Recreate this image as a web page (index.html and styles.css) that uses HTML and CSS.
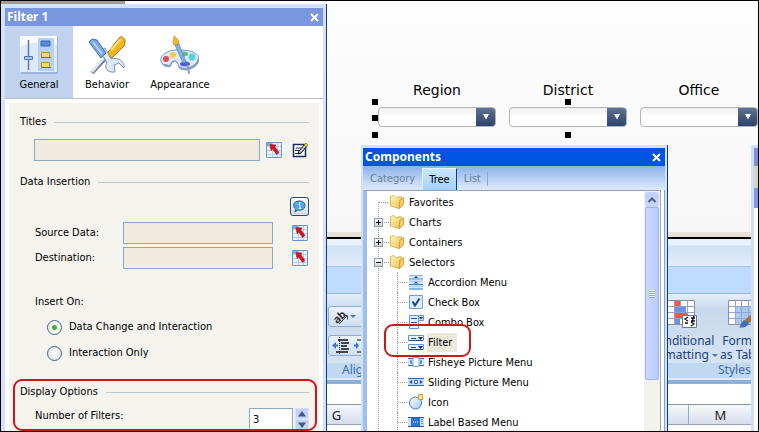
FILE: index.html
```html
<!DOCTYPE html>
<html lang="en">
<head>
<meta charset="utf-8">
<title>Filter properties</title>
<link rel="stylesheet" href="styles.css">
</head>
<body>
<svg class="defs" aria-hidden="true">
  <defs>
    <linearGradient id="gold" x1="0" y1="0" x2="1" y2="1"><stop offset="0" stop-color="#fff6b8"/><stop offset="1" stop-color="#e9c050"/></linearGradient>
    <linearGradient id="ice" x1="0" y1="0" x2="1" y2="1"><stop offset="0" stop-color="#ffffff"/><stop offset="1" stop-color="#a4c8f0"/></linearGradient>
    <symbol id="folder" viewBox="0 0 16 16">
      <path d="M1.500 2.500 5 1.500 7 3.500 12 2.500 13 4 13 12 10 14.500 1.500 12Z" fill="url(#gold)" stroke="#d2aa48" stroke-width=".8"/>
      <path d="M10 14.500 11 6 14.800 3.500 14.500 11Z" fill="#f3cf66" stroke="#b98a2c" stroke-width=".7"/>
    </symbol>
    <symbol id="cellpick" viewBox="0 0 18 18">
      <path d="M0 0h18v18H0z" fill="#fff"/>
      <path d="M1.500 1.500h15v15h-15z" fill="#eef6ff" stroke="#5f95cf"/>
      <path d="M2 2h5v3H2z" fill="#7fb0ee"/>
      <path d="M2 5.500h14M2 9.500h14M2 13.500h14M7.500 2v14M12.500 2v14" stroke="#b3d0f0"/>
      <path d="M5 3.500 11 4 9.800 5.800 14 11.500 11.500 13.500 7.800 8 6 9.500Z" fill="#dd1018" stroke="#a80c14" stroke-width=".6"/>
    </symbol>
  </defs>
</svg>
<main class="desktop">
  <section class="canvas">
    <div class="filters">
      <label class="filter"><span>Region</span><span class="combo"><select></select><svg viewBox="0 0 8 6"><path d="M1 0h6L4 5.500z"/></svg></span></label>
      <label class="filter"><span>District</span><span class="combo"><select></select><svg viewBox="0 0 8 6"><path d="M1 0h6L4 5.500z"/></svg></span></label>
      <label class="filter"><span>Office</span><span class="combo"><select></select><svg viewBox="0 0 8 6"><path d="M1 0h6L4 5.500z"/></svg></span></label>
      <i class="handle left top"></i><i class="handle left middle"></i><i class="handle left bottom"></i>
      <i class="handle center top"></i><i class="handle center bottom"></i>
    </div>
  </section>

  <section class="sheet">
    <div class="sheet-title"></div>
    <div class="sheet-tabs"></div>
    <div class="ribbon">
      <div class="group align">
        <div class="group-body">
          <button class="tool" aria-label="Orientation"><svg viewBox="0 0 32 20">
            <text x="4" y="15" transform="rotate(-42 9 11)" font-size="11" font-weight="bold" fill="#333">ab</text>
            <path d="M10 17 18 9M14.500 8.500h4v4" fill="none" stroke="#444"/><path d="M21 8h6l-3 3z" fill="#4a78b5"/></svg></button>
          <button class="tool" aria-label="Indent"><svg viewBox="0 0 32 20">
            <path d="M9 4h10M12 7h8M12 10h6M12 13h8M7 16h12" stroke="#111" stroke-width="1.500"/><path d="M10.500 1v18" stroke="#111" stroke-dasharray="1 1"/><path d="M3 9.500 7 6v2.500h2v2H7V13z" fill="#3a78cc"/>
            <path d="M30 9.500 27 6v2.500h-2v2h2V13z" fill="#3a78cc"/><path d="M28 4h4M28 16h4" stroke="#111"/></svg></button>
        </div>
        <div class="group-name">Alignment</div>
      </div>
      <div class="group styles">
        <div class="group-body">
          <button class="big"><svg viewBox="0 0 30 30">
            <path d="M.5 1.500h27v24H.500z" fill="#fff" stroke="#8590a8"/>
            <path d="M8 2h6v6H8z" fill="#ee5a48"/><path d="M8 8h11v6H8z" fill="#6a92e8"/><path d="M8 14h12v6H8z" fill="#ee5a48"/><path d="M8 20h5v5H8z" fill="#6a92e8"/>
            <path d="M1 7.500h26M1 13.500h26M1 19.500h26M7.500 2v24M13.500 2v5M20.500 2v24" stroke="#98a2b8" fill="none"/>
            <path d="M15.500 16.500h14v12h-14z" fill="#fff" stroke="#6a7890"/>
            <path d="m21 18-3 2 3 2M18 24h3M24 19h4M24 22h4M27 17l-2 6M24 23l3 2-3 2" fill="none" stroke="#111" stroke-width="1.300"/>
            </svg><span>Conditional<br>Formatting <i class="caret"></i></span></button>
          <button class="big"><svg viewBox="0 0 30 30">
            <path d="M.5 1.500h27v24H.500z" fill="#fff" stroke="#8590a8"/><path d="M8 8h19v17H8z" fill="#a9c8f5"/>
            <path d="M1 7.500h26M1 13.500h26M1 19.500h26M7.500 2v24M13.500 2v24M20.500 2v24" stroke="#8fa5cc" fill="none"/>
            <path d="M11 28c2-1 2-6 6-7l4 3c-2 5-7 5-10 4z" fill="#3c6fc0"/><path d="M17 21 28 11v7l-7 6z" fill="#a8722c"/>
            </svg><span>Format<br>as Table</span></button>
        </div>
        <div class="group-name">Styles</div>
      </div>
    </div>
    <div class="formula"></div>
    <div class="columns"><span>G</span><span></span><span></span><span></span><span></span><span></span><span>M</span><span></span></div>
    <div class="cells"></div>
  </section>

  <section class="window docked" aria-label="Panel">
    <header class="titlebar"></header>
    <div class="docked-strip"></div>
    <div class="docked-body"></div>
  </section>

  <section class="window components">
    <header class="titlebar"><h2>Components</h2><button class="close" aria-label="Close"><svg viewBox="0 0 9 9"><path d="m1 1 7 7M8 1 1 8"/></svg></button></header>
    <nav class="tabs"><button>Category</button><button class="on">Tree</button><button>List</button></nav>
    <div class="tree-pane">
      <ul class="tree">
        <li class="first"><svg class="ic"><use href="#folder"/></svg><span>Favorites</span></li>
        <li class="node"><button aria-label="Expand"><svg viewBox="0 0 9 9"><path d="M2 4.500h5M4.500 2v5"/></svg></button><svg class="ic"><use href="#folder"/></svg><span>Charts</span></li>
        <li class="node"><button aria-label="Expand"><svg viewBox="0 0 9 9"><path d="M2 4.500h5M4.500 2v5"/></svg></button><svg class="ic"><use href="#folder"/></svg><span>Containers</span></li>
        <li class="node"><button aria-label="Collapse"><svg viewBox="0 0 9 9"><path d="M2 4.500h5"/></svg></button><svg class="ic"><use href="#folder"/></svg><span>Selectors</span></li>
        <li class="leaf"><svg class="ic" viewBox="0 0 16 16"><path d="M1 1.500h14v3H1zM1 7h14v3H1zM1 12h14v3.500H1z" fill="#d3e8ff"/><path d="M1 5h14M1 10.500h14M1 15h14" stroke="#3a7fd0"/><path d="M1 1.500h14M1 7h14M1 12h14" stroke="#8dbcf0"/><path d="M6 4h4L8 2zM6 9.500h4L8 7.500z" fill="#123a7a"/></svg><span>Accordion Menu</span></li>
        <li class="leaf"><svg class="ic" viewBox="0 0 16 16"><path d="M1.500 1.500h13v13h-13z" fill="#dcedff" stroke="#6fa3de"/><path d="m4.500 7.500 2.500 4 4.500-7" fill="none" stroke="#17438c" stroke-width="2"/></svg><span>Check Box</span></li>
        <li class="leaf"><svg class="ic" viewBox="0 0 16 16"><path d="M1.500 1.500h9v13h-9z" fill="#e4f1ff" stroke="#5b97dc"/><path d="M10.500 1.500h5v5h-5z" fill="#d3e8ff" stroke="#5b97dc"/><path d="M3 4.500h6M3 8.500h6M3 11.500h6" stroke="#1d4d96"/><path d="M11 3h4l-2 2.500z" fill="#102f66"/></svg><span>Combo Box</span></li>
        <li class="leaf picked"><svg class="ic" viewBox="0 0 16 16"><path d="M.5 1.500h15v5H.500zM.500 10.500h15v5H.500z" fill="#e4f1ff" stroke="#5b97dc"/><path d="M3 4.500h5M3 13.500h5M1 6.500h14M1 15.500h14" stroke="#1d4d96"/><path d="M10 3h5l-2.500 3zM10 12h5l-2.500 3z" fill="#102f66"/></svg><span>Filter</span></li>
        <li class="leaf"><svg class="ic" viewBox="0 0 16 16"><path d="M0 5h16v6.500H0z" fill="#d3e8ff"/><path d="M0 4.500h16M0 11.500h16" stroke="#2c66b8"/><path d="M5 3.500h6v9H5z" fill="#fff" stroke="#6fa3de"/><path d="M2.500 6.500h1v3h-1zM12.500 6.500h1v3h-1z" stroke="#5b97dc" fill="none"/></svg><span>Fisheye Picture Menu</span></li>
        <li class="leaf"><svg class="ic" viewBox="0 0 16 16"><path d="M0 5h16v6.500H0z" fill="#c4dfff"/><path d="M0 4.500h16M0 11.500h16" stroke="#2c66b8"/><path d="M6.500 6.500h3v3h-3z" fill="#fff" stroke="#2c66b8"/><path d="M4 6v4L1.500 8zM12 6v4l2.500-2z" fill="#17438c"/></svg><span>Sliding Picture Menu</span></li>
        <li class="leaf"><svg class="ic" viewBox="0 0 16 16"><circle cx="7.500" cy="9" r="6" fill="url(#ice)" stroke="#3a78cc"/><path d="M10.500.5h4v5h-4z" fill="#ffe79a" stroke="#c79a34"/></svg><span>Icon</span></li>
        <li class="leaf"><svg class="ic" viewBox="0 0 16 16"><path d="M0 4h16v8H0z" fill="#c4dfff"/><path d="M0 3.500h16M0 12.500h16" stroke="#1d59b0"/><path d="M3 4h9v8H3z" fill="#2a74dc"/><path d="M5 8h5" stroke="#fff" stroke-dasharray="1 1"/><path d="M14 5v5" stroke="#17438c" stroke-dasharray="1 1"/></svg><span>Label Based Menu</span></li>
      </ul>
      <div class="scroll"><button aria-label="Scroll up"><svg viewBox="0 0 10 8"><path d="m1.500 6 3.500-3.500L8.500 6"/></svg></button><div class="thumb"></div></div>
    </div>
    <i class="mark mark-filter"></i>
  </section>

  <section class="window props">
    <header class="titlebar"><h2>Filter 1</h2><button class="close" aria-label="Close"><svg viewBox="0 0 9 9"><path d="m1 1 7 7M8 1 1 8"/></svg></button></header>
    <nav class="modes">
      <button class="on"><svg viewBox="0 0 40 40">
        <path d="M2 2h37v37H2z" fill="#9db4d4"/><path d="M1 1h37v36H1z" fill="#dceafa"/><path d="M1 1h37v9C25 6 10 7 1 12z" fill="#f6fbff"/><path d="M19 3h16v33H19z" fill="#b4d2f1"/>
        <path d="M9.500 5v30" stroke="#66799a" stroke-width="1.500"/><path d="M5.500 21.500h8v3h-8z" fill="#a8c6ee" stroke="#4f74ae"/>
        <path d="M22 6h9v5h-9z" fill="#5c88d2" stroke="#3f66ad"/><path d="M22.500 17.500h8v5h-8zM22.500 27.500h8v5h-8z" fill="#fcd658" stroke="#b89030"/><path d="M22 22.500h10M22 32.500h10" stroke="#7c6c38"/></svg><span>General</span></button>
      <button><svg viewBox="0 0 40 40">
        <path d="m18 24-13 14" stroke="#7b8596" stroke-width="4"/><path d="m17 23-12 14" stroke="#e6ecf5" stroke-width="2"/>
        <path d="m19 20 10-13 4-5c2-1 6 2 5 5l-1 4-12 12z" fill="#f3b51c" stroke="#ad7c16"/><path d="m24 15 10-11" stroke="#ffe17c" stroke-width="2"/>
        <path d="m12 16 6-3 6 11c7-2 14 2 13 9l-5-5-5 2 1 7c-8 1-11-4-8-10z" fill="#dceafa" stroke="#7b93bb"/><path d="m2 7 3-3 5 1 9 13-5 5z" fill="#78a5e5" stroke="#4a72b5"/><path d="m6 7 9 12" stroke="#b6d4fa" stroke-width="2"/></svg><span>Behavior</span></button>
      <button><svg viewBox="0 0 40 40">
        <path d="M2 29C-1 20 10 15 20 16c12 0 20 4 19 10-1 7-13 12-19 8-4-3 0-6-5-7-5 0-2 7-8 5-2 0-4-1-5-3z" fill="#8d9fc1"/>
        <path d="M1 27C-1 19 10 14 20 15c12 0 20 4 18 9-1 7-13 12-18 8-4-2 0-6-6-6-5 0-1 6-7 4-3 0-5-1-6-3z" fill="#dceafc" stroke="#7a96c3"/>
        <circle cx="6" cy="24" r="3" fill="#e04c50"/><circle cx="13" cy="20" r="3" fill="#f3ca4a"/><ellipse cx="24" cy="19" rx="4" ry="2.500" fill="#5ac07c"/><circle cx="32" cy="22" r="3.500" fill="#54d2d6"/><ellipse cx="25" cy="29" rx="5" ry="2.500" fill="#5560d0"/>
        <path d="m15 10 4-1 7 18-3 1z" fill="#83aee6" stroke="#557cb8" stroke-width=".7"/><path d="M14 10c-2-4 0-5 0-9 4 3 5 5 5 8z" fill="#f3b92c" stroke="#bd801e" stroke-width=".7"/><path d="m28 30 1 9" stroke="#8d9fc1" stroke-width="2"/></svg><span>Appearance</span></button>
    </nav>
    <form class="sheet-form">
      <h3>Titles</h3>
      <div class="row titles"><input type="text" aria-label="Titles"><button type="button" class="pick" aria-label="Select cells"><svg><use href="#cellpick"/></svg></button><button type="button" class="pick edit" aria-label="Edit titles"><svg viewBox="0 0 18 18"><path d="M2.500 3.500h12v12h-12z" fill="#fff" stroke="#14285c" stroke-width="1.500"/><path d="M5 7h6M4 9.500h4M4 12.500h6" stroke="#333"/><path d="m14 3 2 2-6 7-3 1 1-3z" fill="#b8c8ee" stroke="#111"/><path d="m13 4 2-2 2 2-2 2z" fill="#f5cc30" stroke="#6b5510" stroke-width=".6"/></svg></button></div>
      <h3>Data Insertion</h3>
      <div class="row hint"><button type="button" aria-label="About data insertion"><svg viewBox="0 0 14 14"><path d="M7 1c8 0 8 10 0 10H5l-3 2 1-3C-1 7 0 1 7 1z" fill="#4daae6" stroke="#235f98"/><path d="M6 5h1.500v4M6 9h3" stroke="#fff" fill="none"/><path d="M6.500 2.500h1.500V4H6.500z" fill="#fff"/></svg></button></div>
      <div class="row field"><label for="src">Source Data:</label><input id="src" type="text"><button type="button" class="pick" aria-label="Select source"><svg><use href="#cellpick"/></svg></button></div>
      <div class="row field"><label for="dst">Destination:</label><input id="dst" type="text"><button type="button" class="pick" aria-label="Select destination"><svg><use href="#cellpick"/></svg></button></div>
      <fieldset>
        <legend>Insert On:</legend>
        <label><input type="radio" name="on" checked>Data Change and Interaction</label>
        <label><input type="radio" name="on">Interaction Only</label>
      </fieldset>
      <h3>Display Options</h3>
      <div class="row count"><label for="num">Number of Filters:</label><input id="num" type="text" value="3"><span class="spin"><button type="button" aria-label="More"><svg viewBox="0 0 8 6"><path d="M0 5.500 4 0l4 5.500z"/></svg></button><button type="button" aria-label="Fewer"><svg viewBox="0 0 8 6"><path d="M0 .5 4 6 8 .5z"/></svg></button></span></div>
    </form>
    <i class="mark mark-display"></i>
  </section>
</main>
</body>
</html>
```
FILE: styles.css
```css
* { box-sizing: border-box; }
body { margin: 0; background: #000; color: #000; font: 11px/16px "DejaVu Sans Condensed", "DejaVu Sans", sans-serif; }
button, input, select { font: inherit; color: inherit; margin: 0; padding: 0; border: 0; border-radius: 0; background: none; }
button svg { display: block; }
h2, h3, ul, fieldset { margin: 0; padding: 0; border: 0; }
.defs { position: absolute; width: 0; height: 0; }

.desktop { position: relative; height: 100vh; overflow: hidden; border: 1px solid #000; background: #fcfcfc; }

/* design canvas */
.canvas { height: 236px; padding: 80px 0 0 377px; background: linear-gradient(#fdfdfd, #f7f7f7); border-bottom: 5px solid #e6e2d4; }
.canvas::before { content: ""; position: absolute; left: 0; top: 0; width: 124px; height: 3px; background: #a39c94; }
.filters { position: relative; display: flex; gap: 13px; width: max-content; }
.filter { display: flex; flex-direction: column; align-items: center; gap: 8px; font: 14px/18px "DejaVu Sans", sans-serif; }
.combo { position: relative; display: block; width: 118px; height: 20px; }
.combo select { appearance: none; display: block; width: 100%; height: 100%; border: 1px solid #b4b4b4; border-radius: 4px; background: linear-gradient(#637592, #2b4067) right / 20px 100% no-repeat border-box, linear-gradient(#f0f0f0, #fff 50%); }
.combo svg { position: absolute; right: 6px; top: 7px; width: 8px; height: 6px; fill: #fff; pointer-events: none; }
.handle { position: absolute; width: 6px; height: 6px; background: #000; }
.handle.left { left: -6px; }
.handle.center { left: 50%; margin-left: -3px; }
.handle.top { top: 18px; }
.handle.middle { top: 34px; }
.handle.bottom { top: 51px; }

/* spreadsheet behind the panels */
.sheet { position: absolute; left: 325px; right: 0; top: 236px; bottom: 0; display: flex; flex-direction: column; overflow: hidden; border-top: 2px solid #000; background: #fff; color: #1f3f7d; font: 12px/14px "Noto Sans", sans-serif; }
.sheet-title { height: 28px; background: linear-gradient(#e8f1fc 0 6px, #cfe0f6 7px, #e1edfb); border-bottom: 1px solid #a6c8ee; }
.sheet-tabs { height: 26px; background: #bfdbff; }
.ribbon { display: flex; height: 87px; border-top: 1px solid #9ab8dc; border-bottom: 2px solid #dceaf8; background: linear-gradient(#e6eef8, #c8d9ed 16px, #d8e6f5); }
.group { display: flex; flex: none; flex-direction: column; }
.align { width: 320px; }
.styles { width: 180px; }
.group-body { flex: 1; display: flex; }
.align .group-body { flex-direction: column; justify-content: center; gap: 8px; padding: 4px 0 0 2px; }
.tool { width: 60px; height: 21px; border: 1px solid #8eabd2; border-radius: 3px; background: linear-gradient(#eaf2fb, #cfdff2); }
.tool svg { width: 32px; height: 20px; }
.group-name { height: 15px; background: #c1d8f1; color: #3e6aaa; }
.align .group-name { padding-left: 16px; }
.styles .group-name { padding-left: 72px; }
.big { display: flex; flex-direction: column; gap: 5px; align-items: center; padding-top: 5px; }
.styles .group-body { gap: 2px; }
.big svg { width: 30px; height: 30px; }
.caret { display: inline-block; border: 3px solid transparent; border-top-color: #4a78b5; border-bottom: 0; vertical-align: middle; }
.formula { height: 25px; border-top: 4px solid #8fafd4; border-bottom: 1px solid #8297b0; background: #fff; }
.columns { display: flex; height: 20px; margin-left: -21px; font-size: 13px; line-height: 20px; color: #222; background: linear-gradient(#f6f9fc, #d5dde9); border-bottom: 1px solid #93a2b5; }
.columns span { flex: none; width: 64px; border-right: 1px solid #93a9c4; text-align: center; }
.cells { flex: 1; background: #fff; }

/* floating windows */
.window { position: absolute; bottom: 0; display: flex; flex-direction: column; background: #fff; }
.titlebar { display: flex; align-items: center; justify-content: space-between; flex: none; height: 18px; padding: 0 4px 0 2px; color: #fff; }
.titlebar h2 { font: bold 12px/18px "Noto Sans", sans-serif; }
.close svg { width: 9px; height: 9px; stroke: #fff; stroke-width: 2; }
.mark { position: absolute; border: 2px solid #cc1717; border-radius: 9px; pointer-events: none; }

.docked { right: 0; top: 144px; width: 7px; border: solid #cfe0f8; border-width: 3px 0 0 3px; overflow: hidden; }
.docked .titlebar { background: #7b90d8; padding: 0; }
.docked-strip { flex: none; height: 42px; background: linear-gradient(#d8cfbd 22px, #7d9be0 22px); }
.docked-body { flex: 1; background: #fff; }

.components { left: 360px; top: 144px; width: 307px; border: solid #cfe3fb; border-width: 3px 3px 0 2px; box-shadow: inset -1px 0 #7ea4dc; }
.components::after { content: ""; position: absolute; top: -3px; right: -3px; bottom: 0; width: 1px; background: #123a80; }
.components .titlebar { background: #0054e3; }
.tabs { display: flex; flex: none; height: 24px; padding-top: 2px; background: linear-gradient(#8db2ea, #dfeafb); color: #6c7f9e; }
.tabs button { padding: 0 7px; }
.tabs .on { padding: 0 6px; color: #000; background: linear-gradient(#c8e6ff, #a4d0fb); border: 1px solid #e6f6ff; border-right: 1px solid #0f3c80; border-bottom: 0; }
.tabs button:last-child { position: relative; }
.tabs button:last-child::after { content: ""; position: absolute; right: 0; top: 4px; height: 14px; width: 1px; background: #86a7dc; }
.tree-pane { flex: 1; min-height: 0; display: flex; margin-right: 4px; overflow: hidden; border-left: 4px solid #9ebdf0; border-top: 1px solid #8fa3b4; border-right: 1px solid #9aa8b4; }
.tree { position: relative; flex: 1; padding-top: 1px; list-style: none; }
.tree::before { content: ""; position: absolute; left: 11px; top: 11px; bottom: 0; border-left: 1px dotted #999; }
.tree li { position: relative; display: flex; align-items: center; height: 20px; padding-left: 22px; }
.tree li::before { content: ""; position: absolute; left: 12px; top: 10px; width: 9px; border-top: 1px dotted #999; }
.tree .node { padding-left: 7px; }
.tree .node::before { left: 17px; width: 5px; }
.tree .node button { width: 9px; height: 9px; margin-right: 6px; border: 1px solid #7b9ab5; background: linear-gradient(#fff, #d8d4c4); }
.tree .node button svg { width: 9px; height: 9px; margin: -1px; stroke: #000; }
.tree .leaf { padding-left: 41px; }
.tree .leaf::before { left: 31px; width: 9px; }
.tree .leaf::after { content: ""; position: absolute; left: 30px; top: 0; height: 20px; border-left: 1px dotted #999; }
.tree .ic { flex: none; width: 16px; height: 16px; margin-right: 3px; }
.tree li span { padding: 0 5px 0 1px; line-height: 19px; }
.tree .picked span { background: #ece9d8; }
.scroll { display: flex; flex-direction: column; flex: none; width: 16px; padding: 1px; background: #f3f1ec; }
.scroll button { width: 14px; height: 15px; border-radius: 2px; background: #c3d3fc; }
.scroll button svg { width: 10px; height: 8px; margin: auto; fill: none; stroke: #4d6185; stroke-width: 2; }
.thumb { height: 173px; border: 1px solid #9db4ee; border-radius: 2px; background: repeating-linear-gradient(#eef4ff 0 1px, #8aa8ee 1px 2px) center / 6px 8px no-repeat, linear-gradient(90deg, #cbd9ff, #b9cafb); }
.mark-filter { left: 21px; top: 176px; width: 87px; height: 33px; }

.props { left: 0; top: 3px; width: 325px; border: solid #d3e2fb; border-width: 4px 3px 0 4px; box-shadow: 1px 0 #0c3a86; }
.props .titlebar { background: #7a96df; }
.modes { display: flex; flex: none; height: 73px; border-bottom: 1px solid #b9bec4; background: #fff; }
.modes button { display: flex; flex-direction: column; align-items: center; gap: 2px; width: 68px; padding-top: 9px; }
.modes button:last-child { width: 78px; }
.modes .on { background: #c1d2ee; }
.modes svg { width: 40px; height: 40px; }
.sheet-form { flex: 1; min-height: 0; overflow: hidden; margin: 4px 4px 0; padding: 11px 10px 0 11px; background: #f4f3ee; }
.sheet-form h3 { display: flex; align-items: center; gap: 8px; font-size: 11px; line-height: 16px; font-weight: normal; }
.sheet-form h3::after { content: ""; flex: 1; height: 1px; background: #bfc8cd; }
.row { display: flex; align-items: center; }
.row input { height: 22px; min-width: 0; border: 1px solid #8ea9bf; background: #efebde; }
.titles { gap: 5px; margin: 9px 0 13px 14px; }
.titles input { flex: 1; }
.pick { flex: none; width: 18px; height: 18px; }
.pick svg { width: 18px; height: 18px; }
.edit { margin-left: 3px; }
.hint { justify-content: flex-end; margin-top: 7px; }
.hint button { width: 19px; height: 19px; padding: 2px; border: 1px solid #274a6e; border-radius: 3px; background: linear-gradient(#fff, #d8dde6); }
.hint svg { width: 13px; height: 13px; }
.field { margin: 6px 0 0 15px; }
.field + .field { margin-top: 3px; }
.field label { width: 88px; }
.field input { width: 150px; }
.field .pick { margin-left: auto; }
fieldset { margin: 25px 0 13px 15px; }
legend { padding: 0; margin-bottom: 9px; }
fieldset label { display: flex; align-items: center; gap: 7px; height: 16px; margin: 0 0 10px 12px; }
fieldset input { appearance: none; width: 15px; height: 15px; border: 1px solid #41678f; border-radius: 50%; background: radial-gradient(#fff, #dcdcd6); }
fieldset input:checked { background: radial-gradient(circle, #3cb43c 2px, #f4f6f2 3px); }
.count { align-items: flex-start; margin: 8px 0 0 15px; }
.count label { flex: 1; }
.count input { width: 44px; padding: 0 3px; background: #fff; }
.spin { width: 14px; height: 22px; margin-left: 2px; display: flex; flex-direction: column; background: #c3d3fc; }
.spin button { flex: 1; display: grid; place-items: center; border: 1px solid #d9e3ff; }
.spin svg { width: 8px; height: 6px; fill: #46597e; }
.mark-display { left: 8px; top: 371px; width: 304px; height: 52px; }
```
